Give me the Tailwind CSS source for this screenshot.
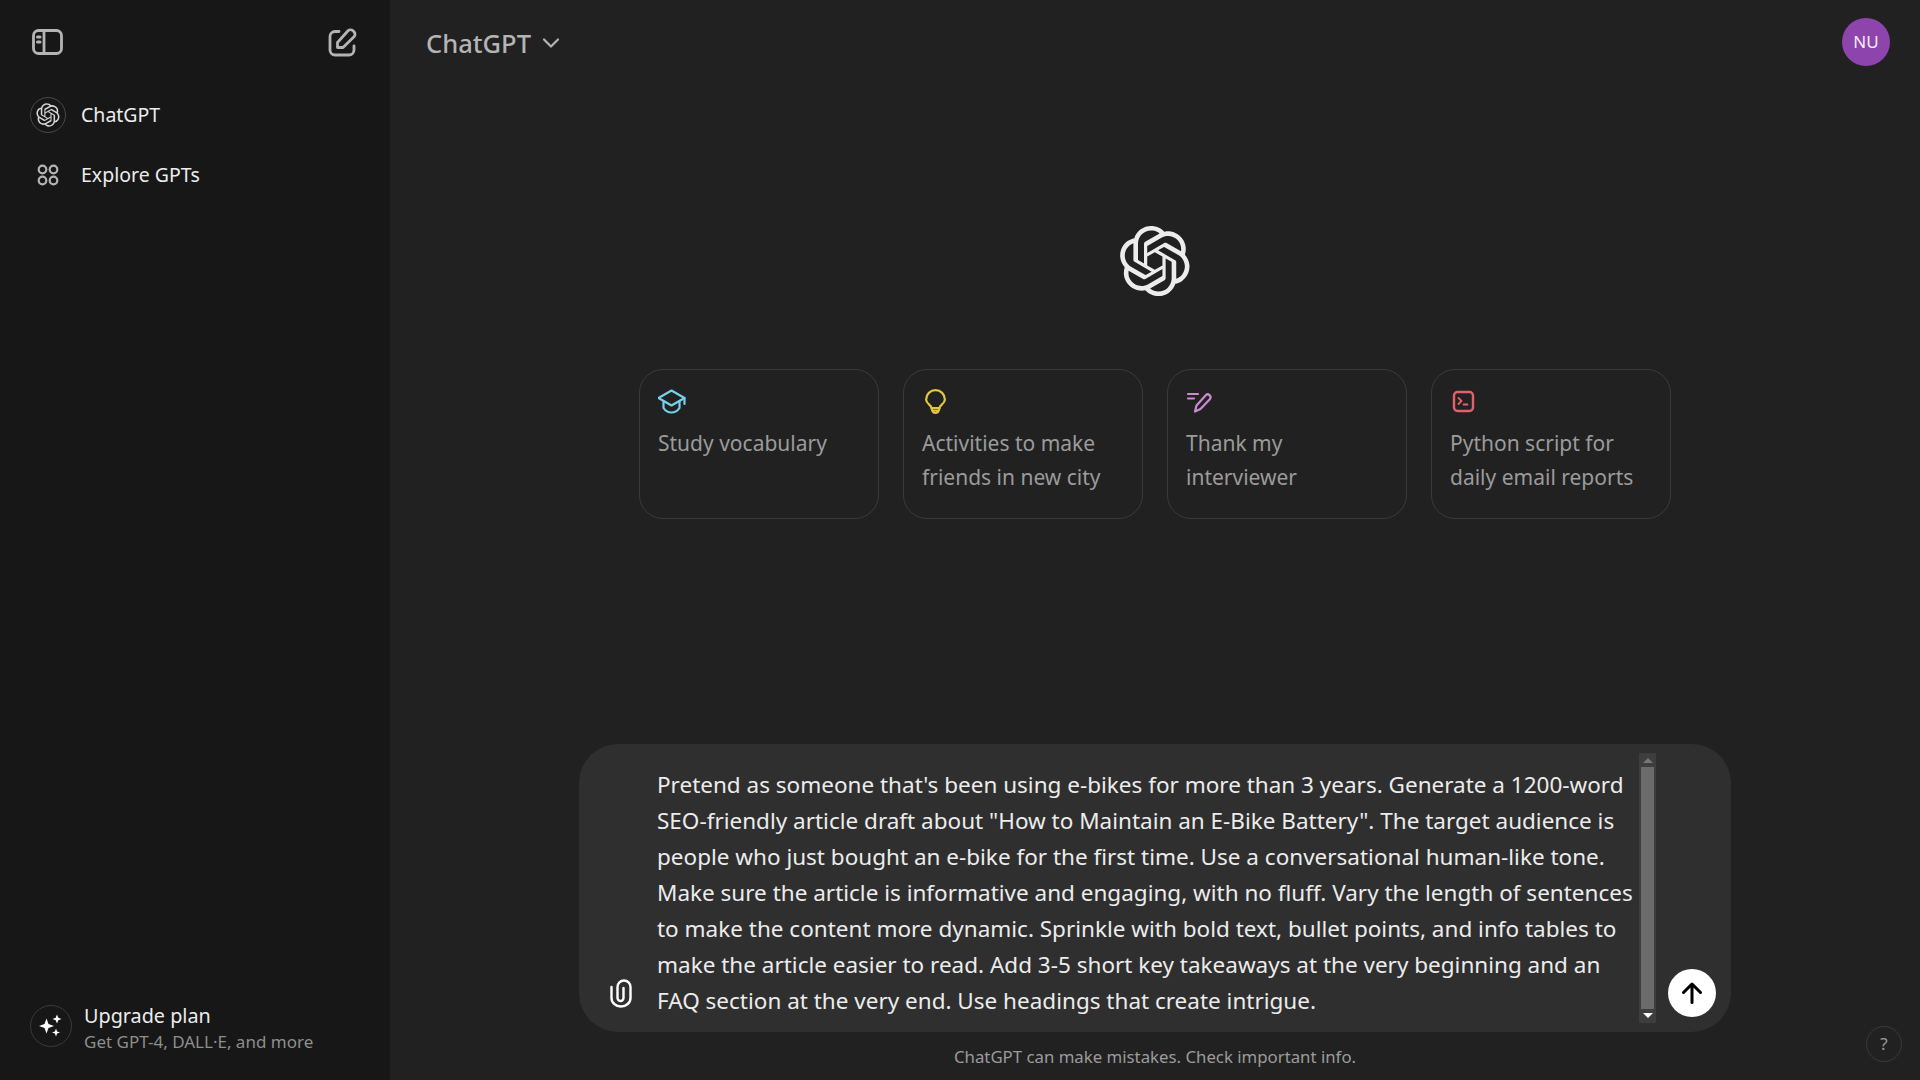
<!DOCTYPE html>
<html lang="en">
  <head>
    <meta charset="UTF-8" />
    <title>ChatGPT</title>
    <script src="https://cdn.jsdelivr.net/npm/@tailwindcss/browser@4"></script>
  </head>
  <body class="bg-[#212121] font-['Noto_Sans',sans-serif] overflow-hidden">
    <svg class="hidden">
      <symbol id="logo" viewBox="0 0 41 41">
        <path fill="currentColor" d="M37.5324 16.8707C37.9808 15.5241 38.1363 14.0974 37.9886 12.6859C37.8409 11.2744 37.3934 9.91076 36.676 8.68622C35.6126 6.83404 33.9882 5.3676 32.0373 4.4985C30.0864 3.62941 27.9098 3.40259 25.8215 3.85078C24.8796 2.7893 23.7219 1.94125 22.4257 1.36341C21.1295 0.785575 19.7249 0.491269 18.3058 0.500197C16.1708 0.495044 14.0893 1.16803 12.3614 2.42214C10.6335 3.67624 9.34853 5.44666 8.6917 7.47815C7.30085 7.76286 5.98686 8.3414 4.8377 9.17505C3.68854 10.0087 2.73073 11.0782 2.02839 12.312C0.956464 14.1591 0.498905 16.2988 0.721698 18.4228C0.944492 20.5467 1.83612 22.5449 3.268 24.1293C2.81966 25.4759 2.66413 26.9026 2.81182 28.3141C2.95951 29.7256 3.40701 31.0892 4.12437 32.3138C5.18791 34.1659 6.8123 35.6322 8.76321 36.5013C10.7141 37.3704 12.8907 37.5973 14.9789 37.1492C15.9208 38.2107 17.0786 39.0587 18.3747 39.6366C19.6709 40.2144 21.0755 40.5087 22.4946 40.4998C24.6307 40.5054 26.7133 39.8321 28.4418 38.5772C30.1704 37.3223 31.4556 35.5506 32.1119 33.5179C33.5027 33.2332 34.8167 32.6547 35.9659 31.821C37.115 30.9874 38.0728 29.9178 38.7752 28.684C39.8458 26.8371 40.3023 24.6979 40.0789 22.5748C39.8556 20.4517 38.9639 18.4544 37.5324 16.8707ZM22.4978 37.8849C20.7443 37.8874 19.0459 37.2733 17.6994 36.1501C17.7601 36.117 17.8666 36.0586 17.936 36.0161L25.9004 31.4156C26.1003 31.3019 26.2663 31.137 26.3813 30.9378C26.4964 30.7386 26.5563 30.5124 26.5549 30.2825V19.0542L29.9213 20.998C29.9389 21.0068 29.9541 21.0198 29.9656 21.0359C29.977 21.052 29.9842 21.0707 29.9867 21.0902V30.3889C29.9842 32.375 29.1946 34.2791 27.7909 35.6841C26.3872 37.0892 24.4838 37.8806 22.4978 37.8849ZM6.39227 31.0064C5.51397 29.4888 5.19742 27.7107 5.49804 25.9832C5.55718 26.0187 5.66048 26.0818 5.73461 26.1244L13.699 30.7248C13.8975 30.8408 14.1233 30.902 14.3532 30.902C14.583 30.902 14.8088 30.8408 15.0073 30.7248L24.731 25.1103V28.9979C24.7321 29.0177 24.7283 29.0376 24.7199 29.0556C24.7115 29.0736 24.6988 29.0893 24.6829 29.1012L16.6317 33.7497C14.9096 34.7416 12.8643 35.0097 10.9447 34.4954C9.02506 33.9811 7.38785 32.7263 6.39227 31.0064ZM4.29707 13.6194C5.17156 12.0998 6.55279 10.9364 8.19885 10.3327C8.19885 10.4013 8.19491 10.5228 8.19491 10.6071V19.808C8.19351 20.0378 8.25334 20.2638 8.36823 20.4629C8.48312 20.6619 8.64893 20.8267 8.84863 20.9404L18.5723 26.5542L15.206 28.4979C15.1894 28.5089 15.1703 28.5155 15.1505 28.5173C15.1307 28.5191 15.1107 28.516 15.0924 28.5082L7.04046 23.8557C5.32135 22.8601 4.06716 21.2235 3.55289 19.3046C3.03862 17.3858 3.30624 15.3413 4.29707 13.6194ZM31.955 20.0556L22.2312 14.4411L25.5976 12.4981C25.6142 12.4872 25.6333 12.4805 25.6531 12.4787C25.6729 12.4769 25.6928 12.4801 25.7111 12.4879L33.7631 17.1364C34.9967 17.849 36.0017 18.8982 36.6606 20.1613C37.3194 21.4244 37.6047 22.849 37.4832 24.2684C37.3617 25.6878 36.8382 27.0432 35.9743 28.1759C35.1103 29.3086 33.9415 30.1717 32.6047 30.6641C32.6047 30.5947 32.6047 30.4733 32.6047 30.3889V21.188C32.6066 20.9586 32.5474 20.7328 32.4332 20.5338C32.319 20.3348 32.154 20.1698 31.955 20.0556ZM35.3055 15.0128C35.2464 14.9765 35.1431 14.9142 35.069 14.8717L27.1045 10.2712C26.906 10.1554 26.6803 10.0943 26.4504 10.0943C26.2206 10.0943 25.9948 10.1554 25.7963 10.2712L16.0726 15.8858V11.9982C16.0715 11.9783 16.0753 11.9585 16.0837 11.9405C16.0921 11.9225 16.1048 11.9068 16.1207 11.8949L24.1719 7.25025C25.4053 6.53903 26.8158 6.19376 28.2383 6.25482C29.6608 6.31589 31.0364 6.78077 32.2044 7.59508C33.3723 8.40939 34.2842 9.53945 34.8334 10.8531C35.3826 12.1667 35.5464 13.6095 35.3055 15.0128ZM14.2424 21.9419L10.8752 19.9981C10.8576 19.9893 10.8423 19.9763 10.8309 19.9602C10.8195 19.9441 10.8122 19.9254 10.8098 19.9058V10.6071C10.8107 9.18295 11.2173 7.78848 11.9819 6.58696C12.7466 5.38544 13.8377 4.42659 15.1275 3.82264C16.4173 3.21869 17.8524 2.99464 19.2649 3.1767C20.6775 3.35876 22.0089 3.93941 23.1034 4.85067C23.0427 4.88379 22.937 4.94215 22.8668 4.98473L14.9024 9.58517C14.7025 9.69878 14.5366 9.86356 14.4215 10.0626C14.3065 10.2616 14.2466 10.4877 14.2479 10.7175L14.2424 21.9419ZM16.071 17.9991L20.4018 15.4978L24.7325 17.9975V22.9985L20.4018 25.4983L16.071 22.9985V17.9991Z" />
      </symbol>
    </svg>

    <div class="flex h-screen">
      <!-- Sidebar -->
      <aside class="w-[390px] shrink-0 bg-[#171717] flex flex-col px-[30px]">
        <div class="h-[84px] flex items-center justify-between pl-[2px] pr-[2px]">
          <svg class="w-[31px] h-[26px] text-[#b4b4b4]" viewBox="0 0 31 26" fill="none" stroke="currentColor" stroke-width="2.8">
            <rect x="1.5" y="1.500" width="28" height="23" rx="5" />
            <path d="M12 1.500v23" />
            <path d="M5.500 8h2.500M5.500 13h2.500" stroke-width="3" stroke-linecap="round" />
          </svg>
          <svg class="w-[30px] h-[30px] text-[#b4b4b4]" viewBox="0 0 30 30" fill="none" stroke="currentColor" stroke-width="2.8" stroke-linecap="round" stroke-linejoin="round">
            <path d="M11 4.500H7a5 5 0 0 0-5 5V23a5 5 0 0 0 5 5h14a5 5 0 0 0 5-5v-4" />
            <path d="M9.500 20.500v-5L20 3.800a3.600 3.600 0 0 1 5 0l1 1a3.600 3.600 0 0 1 0 5L15 20.500z" />
          </svg>
        </div>
        <div class="flex items-center h-[36px] mt-[13px] gap-[15px]">
          <span class="w-[36px] h-[36px] rounded-full border border-[#4a4a4a] flex items-center justify-center text-[#d6d6d6]">
            <svg class="w-[24px] h-[24px]"><use href="#logo" /></svg>
          </span>
          <span class="text-[19.500px] text-[#ececec]">ChatGPT</span>
        </div>
        <div class="flex items-center h-[36px] mt-[24px] gap-[15px]">
          <span class="w-[36px] h-[36px] flex items-center justify-center">
            <svg class="w-[24px] h-[24px] text-[#b4b4b4]" viewBox="0 0 24 24" fill="none" stroke="currentColor" stroke-width="2.2">
              <circle cx="6.500" cy="6.500" r="3.800" />
              <circle cx="17.500" cy="6.500" r="3.800" />
              <circle cx="6.500" cy="17.500" r="3.800" />
              <circle cx="17.500" cy="17.500" r="3.800" />
            </svg>
          </span>
          <span class="text-[19.500px] text-[#ececec]">Explore GPTs</span>
        </div>
        <div class="mt-auto mb-[26px] flex items-center gap-[12px]">
          <span class="w-[42px] h-[42px] mb-[5px] rounded-full border border-[#3a3a3a] flex items-center justify-center">
            <svg class="w-[26px] h-[26px] text-white" viewBox="0 0 26 26" fill="currentColor">
              <path d="M8.500 5.500l2 5.500 5.500 2-5.500 2-2 5.500-2-5.500L1 13l5.500-2z" />
              <path d="M19 1.500l1.300 3.200 3.200 1.300-3.200 1.300L19 10.500l-1.300-3.200L14.500 6l3.200-1.300z" />
              <path d="M18 15.500l1.100 2.900 2.900 1.100-2.900 1.100L18 23.500l-1.100-2.900-2.900-1.100 2.900-1.100z" />
            </svg>
          </span>
          <div>
            <div class="text-[19.800px] leading-[28px] text-[#ececec]">Upgrade plan</div>
            <div class="text-[17px] leading-[24px] text-[#8e8e8e]">Get GPT-4, DALL·E, and more</div>
          </div>
        </div>
      </aside>

      <!-- Main -->
      <main class="flex-1 flex flex-col relative">
        <header class="h-[84px] flex items-center justify-between pl-[36px] pr-[30px]">
          <div class="flex items-center gap-[10px] pt-[2px]">
            <span class="text-[25.500px] font-medium text-[#b4b4b4]">ChatGPT</span>
            <svg class="w-[20px] h-[12px] text-[#b4b4b4]" viewBox="0 0 20 12" fill="none" stroke="currentColor" stroke-width="2.200" stroke-linecap="round" stroke-linejoin="round">
              <path d="M3 2.500l7 7 7-7" />
            </svg>
          </div>
          <div class="w-[48px] h-[48px] rounded-full bg-[#8e44ad] flex items-center justify-center text-[17px] text-white/90">NU</div>
        </header>

        <div class="flex justify-center mt-[141px] text-[#ececec]">
          <svg class="w-[72px] h-[72px]"><use href="#logo" /></svg>
        </div>

        <!-- Prompt cards -->
        <div class="flex justify-center gap-[24px] mt-[72px]">
          <div class="w-[240px] h-[150px] rounded-[24px] border border-[#3a3a3a] px-[18px] pt-[16px]">
            <svg class="w-[30px] h-[30px] text-[#76d0eb]" viewBox="0 0 30 30" fill="none" stroke="currentColor" stroke-width="2.200" stroke-linejoin="round" stroke-linecap="round">
              <g transform="translate(-1.500 0)">
                <path d="M15 4.500L28 12l-13 7.500L2 12z" />
                <path d="M7 15.500v6.500c2 3 5 4.500 8 4.500s6-1.500 8-4.500v-6.500" />
                <path d="M28 12v6" />
              </g>
            </svg>
            <div class="mt-[10px] text-[21px] leading-[34px] text-[#9b9b9b]">Study vocabulary</div>
          </div>
          <div class="w-[240px] h-[150px] rounded-[24px] border border-[#3a3a3a] px-[18px] pt-[16px]">
            <svg class="w-[30px] h-[30px] text-[#e2c541]" viewBox="0 0 30 30" fill="none" stroke="currentColor" stroke-width="2.200" stroke-linejoin="round" stroke-linecap="round">
              <path d="M9.500 22c0-3-5.400-4-5.400-8.500a9.400 9.400 0 0 1 18.800 0c0 4.500-5.400 5.500-5.400 8.500z" />
              <path d="M9.500 22c.5 2.500 2 5 4 5s3.500-2.500 4-5M10.500 24.500h6" />
            </svg>
            <div class="mt-[10px] text-[21px] leading-[34px] text-[#9b9b9b]">Activities to make<br />friends in new city</div>
          </div>
          <div class="w-[240px] h-[150px] rounded-[24px] border border-[#3a3a3a] px-[18px] pt-[16px]">
            <svg class="w-[30px] h-[30px] text-[#cb8bd0]" viewBox="0 0 30 30" fill="none" stroke="currentColor" stroke-width="2.200" stroke-linejoin="round" stroke-linecap="round">
              <path d="M2 8h10M2 12.500h6" />
              <path d="M9 25.500l1.500-6L20 9c2-2 6 1 4 4l-9.500 10z" />
            </svg>
            <div class="mt-[10px] text-[21px] leading-[34px] text-[#9b9b9b]">Thank my<br />interviewer</div>
          </div>
          <div class="w-[240px] h-[150px] rounded-[24px] border border-[#3a3a3a] px-[18px] pt-[16px]">
            <svg class="w-[30px] h-[30px] text-[#e2626b]" viewBox="0 0 30 30" fill="none" stroke="currentColor" stroke-width="2.400" stroke-linejoin="round" stroke-linecap="round">
              <rect x="4" y="6" width="19" height="19" rx="3.500" />
              <path d="M8.500 12l3 3-3 3" stroke-width="1.800" />
              <path d="M13.500 18.500h4" stroke-width="1.800" />
            </svg>
            <div class="mt-[10px] text-[21px] leading-[34px] text-[#9b9b9b]">Python script for<br />daily email reports</div>
          </div>
        </div>

        <!-- Message box -->
        <div class="mt-auto flex justify-center">
          <div class="w-[1152px] h-[288px] rounded-[39px] bg-[#2f2f2f] flex items-end pb-[9px] pl-[31px] pr-[15px]">
            <svg class="w-[22px] h-[29px] mb-[15px] text-white shrink-0" viewBox="0 0 22 29" fill="none" stroke="currentColor" stroke-width="2.400" stroke-linecap="round">
              <path d="M1.500 8V19a9.500 8.500 0 0 0 19 0V8a6.500 6.500 0 0 0-13 0V19a3 3 0 0 0 6 0V9" />
            </svg>
            <div class="ml-[25px] w-[982px] self-start pt-[23px] text-[22.500px] leading-[36px] text-[#ececec] whitespace-nowrap">
              Pretend as someone that's been using e-bikes for more than 3 years. Generate a 1200-word<br />
              SEO-friendly article draft about "How to Maintain an E-Bike Battery". The target audience is<br />
              people who just bought an e-bike for the first time. Use a conversational human-like tone.<br />
              Make sure the article is informative and engaging, with no fluff. Vary the length of sentences<br />
              to make the content more dynamic. Sprinkle with bold text, bullet points, and info tables to<br />
              make the article easier to read. Add 3-5 short key takeaways at the very beginning and an<br />
              FAQ section at the very end. Use headings that create intrigue.
            </div>
            <div class="w-[17px] h-[270px] bg-[#3e3e3e] flex flex-col items-center justify-between py-[5px] self-start mt-[9px]">
              <span class="w-0 h-0 border-x-[5px] border-x-transparent border-b-[5px] border-b-[#777777]"></span>
              <span class="w-[13px] flex-1 my-[4px] bg-[#6b6b6b]"></span>
              <span class="w-0 h-0 border-x-[5px] border-x-transparent border-t-[5px] border-t-white"></span>
            </div>
            <button class="ml-[12px] mb-[6px] w-[48px] h-[48px] rounded-full bg-white flex items-center justify-center shrink-0">
              <svg class="w-[24px] h-[24px] text-black" viewBox="0 0 24 24" fill="none" stroke="currentColor" stroke-width="3" stroke-linecap="round" stroke-linejoin="round">
                <path d="M12 21.500V3M3.500 11.500L12 3l8.500 8.500" />
              </svg>
            </button>
          </div>
        </div>
        <div class="h-[48px] pt-[10px] text-center text-[16.800px] leading-[30px] text-[#9b9b9b]">ChatGPT can make mistakes. Check important info.</div>

        <div class="absolute right-[18px] bottom-[18px] w-[36px] h-[36px] rounded-full border border-[#3a3a3a] flex items-center justify-center text-[17px] text-[#9b9b9b]">?</div>
      </main>
    </div>
  </body>
</html>
